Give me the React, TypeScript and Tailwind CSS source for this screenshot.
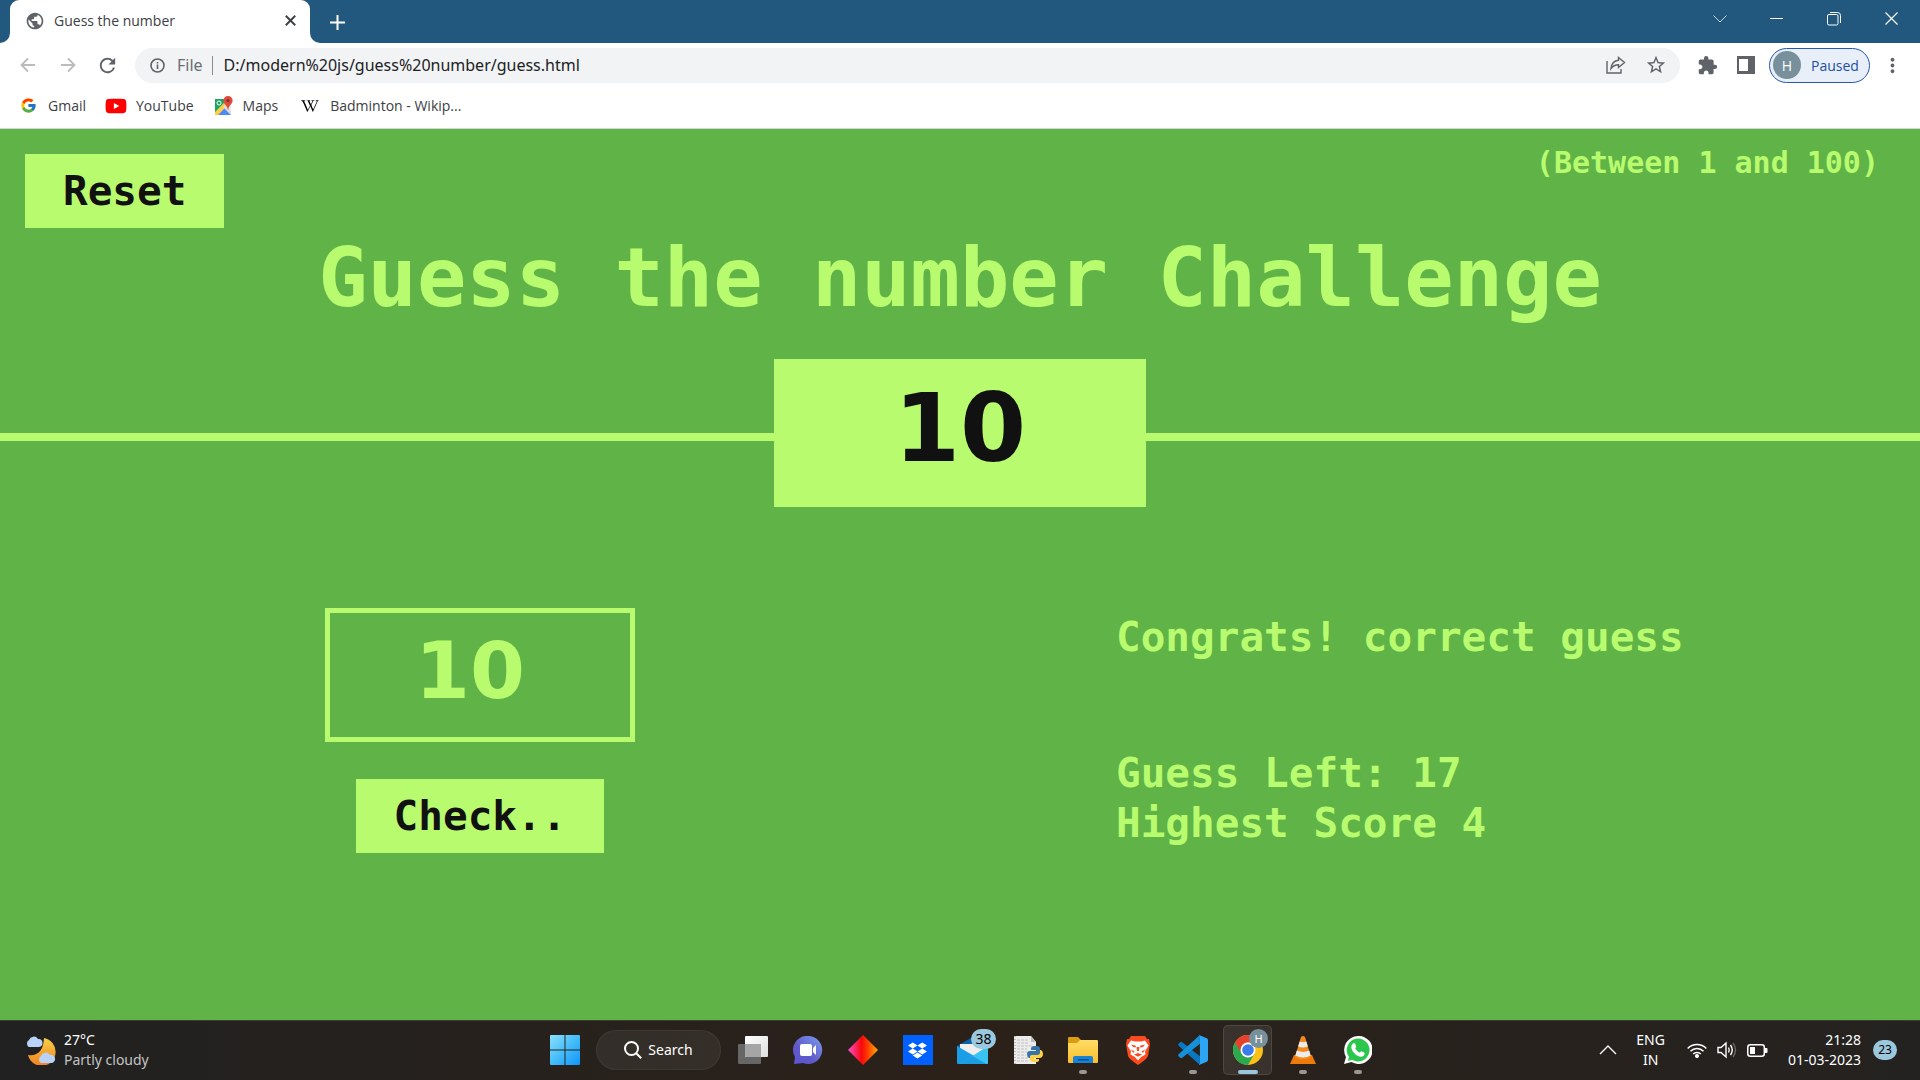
import React, { useState } from "react";
import { FcGoogle } from "react-icons/fc";
import { FaYoutube, FaWikipediaW, FaDropbox } from "react-icons/fa";
import { MdExtension, MdStarBorder, MdPublic, MdMoreVert, MdRefresh } from "react-icons/md";

function MapsIcon() {
  return (
    <svg width="18" height="20" viewBox="0 0 18 20" aria-hidden="true">
      <rect x="0" y="3" width="16" height="16" rx="1.5" fill="#e8e8e8" />
      <path d="M0 3h13L0 17z" fill="#1da462" />
      <path d="M1 19 9 11l7 8z" fill="#4c8bf5" />
      <path d="M0 16 13 3l3 3L3 19H0z" fill="#ffce44" />
      <path d="m10 9 6 6v4L8 11z" fill="#dcdcdc" />
      <path d="M13 0a4.600 4.600 0 0 0-4.600 4.600C8.400 8 12 9 12.700 13.500h.6C14 9 17.600 8 17.600 4.600A4.600 4.600 0 0 0 13 0z" fill="#dd4b3e" />
      <circle cx="13" cy="4.600" r="1.600" fill="#822f2b" />
      <circle cx="4" cy="7" r="2" fill="none" stroke="#fff" strokeWidth="1" />
    </svg>
  );
}

function Arrow({ flip }: { flip?: boolean }) {
  return (
    <svg width="16" height="16" viewBox="0 0 16 16" fill="none" stroke="#babcbe" strokeWidth="1.800" className={flip ? "rotate-180" : ""} aria-hidden="true">
      <path d="M15 8H2M8 1.500 1.500 8 8 14.500" />
    </svg>
  );
}

function TabStrip() {
  return (
    <div className="flex h-[43px] items-end bg-[#22577e] text-white">
      <svg width="10" height="10" className="shrink-0" aria-hidden="true"><path d="M10 0v10H0a10 10 0 0 0 10-10z" fill="#fff" /></svg>
      <div className="flex h-full w-[300px] items-center rounded-t-[9px] bg-white pr-[10px] pb-[2px] pl-[15px] text-[#3c4043]">
        <MdPublic className="size-[20px] text-[#5f6368]" />
        <span className="ml-[9px] flex-1 text-[14px]">Guess the number</span>
        <button aria-label="Close tab" className="grid size-5 place-items-center">
          <svg width="11" height="11" viewBox="0 0 10 10" stroke="#3c4043" strokeWidth="1.700"><path d="m.7.700 8.600 8.600M9.300.700.700 9.300" /></svg>
        </button>
      </div>
      <svg width="10" height="10" className="shrink-0" aria-hidden="true"><path d="M0 0v10h10a10 10 0 0 1-10-10z" fill="#fff" /></svg>
      <button aria-label="New tab" className="mb-[5px] ml-px grid size-[32px] place-items-center">
        <svg width="15" height="15" viewBox="0 0 15 15" stroke="#fff" strokeWidth="2"><path d="M7.500 0v15M0 7.500h15" /></svg>
      </button>
      <div className="ml-auto flex h-[37px] items-center self-start">
        <button aria-label="Search tabs" className="grid h-full w-[57px] place-items-center">
          <svg width="14" height="8" viewBox="0 0 14 8" fill="none" stroke="#c8d5df"><path d="m.5.500 6.500 6.500L13.500.500" /></svg>
        </button>
        <button aria-label="Minimize" className="grid h-full w-[57px] place-items-center">
          <svg width="13" height="1"><rect width="13" height="1" fill="#fff" /></svg>
        </button>
        <button aria-label="Restore" className="grid h-full w-[57px] place-items-center">
          <svg width="14" height="14" viewBox="0 0 14 14" fill="none" stroke="#fff"><rect x=".5" y="2.500" width="10.500" height="10.500" rx="1.500" /><path d="M3 .5h7.500a3 3 0 0 1 3 3V11" /></svg>
        </button>
        <button aria-label="Close" className="grid h-full w-[58px] place-items-center">
          <svg width="13" height="13" viewBox="0 0 13 13" stroke="#fff" strokeWidth="1.200"><path d="m.5.500 12 12m0-12-12 12" /></svg>
        </button>
      </div>
    </div>
  );
}

function Toolbar() {
  return (
    <div className="flex h-[44px] items-center pr-[16px] pl-[20px]">
      <button aria-label="Back" className="grid w-4 place-items-center"><Arrow /></button>
      <button aria-label="Forward" className="ml-[24px] grid w-4 place-items-center"><Arrow flip /></button>
      <button aria-label="Reload" className="ml-[20px]"><MdRefresh className="size-[23px] text-[#5f6368]" /></button>
      <div className="ml-[16px] flex h-[35px] flex-1 items-center rounded-full bg-[#f1f3f4] pr-[13px] pl-[15px] font-['Noto_Sans',sans-serif]">
        <svg width="15" height="15" viewBox="0 0 15 15" fill="none" stroke="#5f6368" strokeWidth="1.600" aria-hidden="true"><circle cx="7.500" cy="7.500" r="6.500" /><path d="M7.500 6.500v4.500M7.500 4v1.500" /></svg>
        <span className="ml-[12px] text-[16px] text-[#6b6f73]">File</span>
        <span className="mx-[9px] h-[19px] w-px bg-[#8a8d91]" />
        <input aria-label="Address" defaultValue="D:/modern%20js/guess%20number/guess.html" className="ml-[2px] min-w-0 flex-1 bg-transparent text-[16px] text-[#202124] outline-none" />
        <button aria-label="Share">
          <svg width="20" height="18" viewBox="0 0 20 18" fill="none" stroke="#5f6368" strokeWidth="1.400"><path d="M1 5v12h14v-4" /><path d="M12.500 1.500 18.500 6.500l-6 5V8.700C9 8.700 7 9.700 5 12.500 5.500 8 8 4.800 12.500 4.300z" /></svg>
        </button>
        <button aria-label="Bookmark this page" className="ml-[19px]"><MdStarBorder className="size-[22px] text-[#5f6368]" /></button>
      </div>
      <button aria-label="Extensions" className="ml-[17px]"><MdExtension className="size-[21px] text-[#5f6368]" /></button>
      <button aria-label="Side panel" className="ml-[19px]">
        <svg width="18" height="18"><rect width="18" height="18" fill="#5f6368" /><rect x="2" y="3" width="9" height="12" fill="#fff" /></svg>
      </button>
      <button className="ml-[14px] flex h-[35px] w-[101px] items-center rounded-full border border-[#2458b0] bg-[#e9eff8] pl-[3px] text-[14px] text-[#2050a5]">
        <span className="grid size-[28px] place-items-center rounded-full bg-[#78909c] text-[14px] text-white">H</span>
        <span className="ml-[10px]">Paused</span>
      </button>
      <button aria-label="Menu" className="ml-[11px]"><MdMoreVert className="size-[23px] text-[#5f6368]" /></button>
    </div>
  );
}

function Bookmarks() {
  const link = "flex items-center text-[14px] text-[#3c4043]";
  return (
    <nav className="flex h-[42px] items-center border-b border-[#d5d8db] pb-[4px] pl-[20px]">
      <a href="#gmail" className={link}><FcGoogle className="mr-[11px] size-[17px]" />Gmail</a>
      <a href="#youtube" className={link}><FaYoutube className="mr-[9px] ml-[19px] size-[22px] text-[#f00]" />YouTube</a>
      <a href="#maps" className={link}><span className="mr-[10px] ml-[21px]"><MapsIcon /></span>Maps</a>
      <a href="#wiki" className={link}><FaWikipediaW className="mr-[11px] ml-[23px] size-[18px] text-black" />Badminton - Wikip...</a>
    </nav>
  );
}

function Game() {
  const [guess, setGuess] = useState("10");
  const button = "bg-[#b9fb6e] px-[38px] py-3 text-[41px] leading-[50px] text-[#111]";
  return (
    <main className="flex-1 bg-[#60b347] font-['DejaVu_Sans_Mono',monospace] font-bold text-[#b9fb6e]">
      <div className="flex items-start justify-between px-[25px] pt-[25px]">
        <button className={button}>Reset</button>
        <p className="-mt-[9px] pr-[16px] text-[30px] leading-9">(Between 1 and 100)</p>
      </div>
      <h1 className="pt-px text-center text-[82px] leading-[98px]">Guess the number Challenge</h1>
      <div className="mt-[32px] flex items-center">
        <div className="mt-2 h-2 flex-1 bg-[#b9fb6e]" />
        <output className="w-[372px] bg-[#b9fb6e] pt-[14px] pb-[24px] text-center font-['DejaVu_Sans',sans-serif] text-[95px] leading-[110px] text-[#111]">10</output>
        <div className="mt-2 h-2 flex-1 bg-[#b9fb6e]" />
      </div>
      <section className="mt-[101px] grid grid-cols-2">
        <div className="flex flex-col items-center">
          <input aria-label="Your guess" value={guess} onChange={(e) => setGuess(e.target.value)} className="h-[134px] w-[310px] border-[5px] border-[#b9fb6e] bg-transparent pr-[20px] pb-[8px] text-center font-['DejaVu_Sans',sans-serif] text-[79px] outline-none" />
          <button className={`mt-[37px] ${button}`}>Check..</button>
        </div>
        <div className="pt-1 pl-[156px] text-[41px] leading-[50px]">
          <p className="mb-[86px]">Congrats! correct guess</p>
          <p>Guess Left: 17</p>
          <p>Highest Score 4</p>
        </div>
      </section>
    </main>
  );
}

function WindowsIcon() {
  return (
    <svg width="30" height="30" viewBox="0 0 30 30">
      <defs><linearGradient id="win" x1="0" y1="0" x2="1" y2="1"><stop stopColor="#8be0fc" /><stop offset=".5" stopColor="#45bdf9" /><stop offset="1" stopColor="#0f94fb" /></linearGradient></defs>
      <path d="M1 0h13.500v14.500H0V1a1 1 0 0 1 1-1zM15.500 0H29a1 1 0 0 1 1 1v13.500H15.500zM0 15.500h14.500V30H1a1 1 0 0 1-1-1zM15.500 15.500H30V29a1 1 0 0 1-1 1H15.500z" fill="url(#win)" />
    </svg>
  );
}

function TaskViewIcon() {
  return (
    <svg width="30" height="28" viewBox="0 0 30 28">
      <defs><linearGradient id="tv" x1="0" y1="0" x2="1" y2="1"><stop stopColor="#fff" /><stop offset="1" stopColor="#ddd" /></linearGradient></defs>
      <rect y="8" width="23" height="20" rx="1" fill="#666" />
      <rect x="7" width="23" height="21" rx="1" fill="url(#tv)" />
      <path d="M7 8h16v13H8a1 1 0 0 1-1-1z" fill="#a5a5a5" />
    </svg>
  );
}

function ChatIcon() {
  return (
    <svg width="30" height="28" viewBox="0 0 30 28">
      <defs><linearGradient id="chat" x1="0" y1="1" x2="1" y2="0"><stop stopColor="#5a55d6" /><stop offset=".4" stopColor="#6059c9" /><stop offset="1" stopColor="#7b9ff0" /></linearGradient></defs>
      <path d="M15 0a14 14 0 1 1-5 27L1 28l1-7A14 14 0 0 1 15 0z" fill="url(#chat)" />
      <rect x="7" y="8" width="12" height="12" rx="2" fill="#fff" />
      <path d="m20 12 3-3v10l-3-3z" fill="#fff" />
    </svg>
  );
}

function DiamondIcon() {
  return (
    <svg width="30" height="30" viewBox="0 0 30 30">
      <defs><linearGradient id="dia"><stop stopColor="#ff4fd0" /><stop offset=".45" stopColor="#f8080c" /><stop offset=".65" stopColor="#ff3b00" /><stop offset="1" stopColor="#ffae00" /></linearGradient></defs>
      <path d="m15 0 15 15-15 15L0 15z" fill="url(#dia)" />
    </svg>
  );
}

function MailIcon() {
  return (
    <svg width="31" height="27" viewBox="0 0 31 27">
      <path d="M0 9 15.500 0 31 9v6H0z" fill="#0a5fa8" />
      <path d="M3 7h25v8l-12 7L3 13z" fill="#eee" />
      <path d="M0 9 31 27H1a1 1 0 0 1-1-1z" fill="#1a9fe6" />
      <path d="M31 9v17a1 1 0 0 1-1 1H3z" fill="#39c4f2" />
      <path d="m15.500 19 14 8H3z" fill="#1d9ee4" />
    </svg>
  );
}

function PythonFileIcon() {
  return (
    <svg width="30" height="30" viewBox="0 0 30 30">
      <path d="M1 1h17l5 6v22H1z" fill="#ececec" />
      <path d="M18 1v6h5z" fill="#bbb" />
      <path d="M4 5h12M4 8h12M4 11h15M4 14h10M4 17h10M4 20h9M4 23h12M4 26h12" stroke="#c2c2c2" strokeDasharray="3 1" />
      <path d="M2 1v28" stroke="#888" strokeDasharray="1 2" />
      <path d="M21 11h3q3 0 3 3v4q0 2-2 2h-5q-3 0-3 3h-1q-2-1-2-4t3-3h6v-1h-5v-1q0-3 3-3z" fill="#3673a8" />
      <path d="M27 15h1q2 1 2 4t-3 4h-6v1h5v1q0 2-3 2h-3q-3 0-3-3v-2q0-2 3-2h4q3 0 3-3z" fill="#ffd243" />
    </svg>
  );
}

function FolderIcon() {
  return (
    <svg width="30" height="26" viewBox="0 0 30 26">
      <defs><linearGradient id="fold" x1="0" y1="0" x2="0" y2="1"><stop stopColor="#ffdc66" /><stop offset="1" stopColor="#fcbf2b" /></linearGradient></defs>
      <path d="M0 1a1 1 0 0 1 1-1h9l3 3h16v6H0z" fill="#dc9c11" />
      <path d="M0 6h9l3-3h17a1 1 0 0 1 1 1v21a1 1 0 0 1-1 1H1a1 1 0 0 1-1-1z" fill="url(#fold)" />
      <path d="M5 26v-5a2 2 0 0 1 2-2h16a2 2 0 0 1 2 2v5z" fill="#1782d6" />
      <rect x="10" y="22" width="11" height="1.500" fill="#0b4f8f" />
    </svg>
  );
}

function BraveIcon() {
  return (
    <svg width="26" height="30" viewBox="0 0 26 30">
      <path d="M6 1h14l2 3h2l1 5-2 12q-1 3-10 9-9-6-10-9L1 9l1-5h2z" fill="#fb4a20" />
      <path d="m6 5.500 4 1h6l4-1 3.500 5-3.500 6 .5 3-4.500 2.500-3 3.500-3-3.500L5.500 19.500l.5-3-3.500-6z" fill="#fff" />
      <path d="m6 9.500 5 1.200-.5 1.800L8 12zm14 0-5 1.200.5 1.800L18 12zM11.500 12h3l-.5 4h-2zM5.500 14l4.500 3-2 .8zm15 0L16 17l2 .8zM9 19.500l4-1.500 4 1.500-4 2.300z" fill="#fb4a20" />
    </svg>
  );
}

function CodeIcon() {
  return (
    <svg width="30" height="30" viewBox="0 0 100 100">
      <path d="M2 29 7 24q3-3 7-0L73 71v29L2 36q-3-4 0-7z" fill="#0a78c0" />
      <path d="M2 71l5 5q3 3 7 0L73 29V0L2 64q-3 4 0 7z" fill="#1590dc" />
      <path d="M70 0 96 11q4 2 4 6v66q0 4-4 6L70 100q-2 0 3-5V5z" fill="#2ba5f4" />
    </svg>
  );
}

function ChromeIcon() {
  return (
    <svg width="30" height="30" viewBox="0 0 30 30">
      <circle cx="15" cy="15" r="15" fill="#fbc116" />
      <path d="M2 7.500A15 15 0 0 0 15 30l6.500-11.300L15 15z" fill="#2ca94f" />
      <path d="M2 7.500a15 15 0 0 1 26 0H15A7.500 7.500 0 0 0 8.500 18.700z" fill="#e8402f" />
      <circle cx="15" cy="15" r="7.500" fill="#fff" />
      <circle cx="15" cy="15" r="5.800" fill="#3b7bea" />
    </svg>
  );
}

function VlcIcon() {
  return (
    <svg width="26" height="28" viewBox="0 0 26 28">
      <path d="M4 19h18l4 9H0z" fill="#ee7a0c" />
      <path d="M11 1q2-2 4 0l6 20q-8 5-16 0z" fill="#f58a1b" />
      <path d="m9.700 5.500-1.600 5q5 2 9.800 0l-1.600-5q-3.300 1.300-6.600 0zM6.800 14.500l-1.500 5q8 4 15.400 0l-1.500-5q-6 2.800-12.400 0z" fill="#ececec" />
    </svg>
  );
}

function WhatsAppIcon() {
  return (
    <svg width="28" height="28" viewBox="0 0 28 28">
      <path d="M14 0a14 14 0 1 1-6.500 26L0 28l2-7A14 14 0 0 1 14 0z" fill="#fff" />
      <path d="M14 2.500a11.500 11.500 0 1 1-6 21.300l-4.200 1.200 1.200-4.200A11.500 11.500 0 0 1 14 2.500z" fill="#2cc64d" />
      <path d="M9 7.500q1-.8 2 0l1.200 3q.2.700-1 2 1.500 3 4.600 4.300 1.200-1.700 2-1.400l2.700 1.400q.5 4-4 4-4-.5-7.500-5-3.500-5 0-8.300z" fill="#fff" />
    </svg>
  );
}

function TaskbarApp({ label, children, state, badge }: { label: string; children: React.ReactNode; state?: "open" | "active"; badge?: React.ReactNode }) {
  return (
    <button aria-label={label} className="relative grid h-[60px] w-[55px] place-items-center">
      {state === "active" && <span className="absolute inset-x-[3px] inset-y-[5px] rounded-[5px] border border-white/10 bg-white/8" />}
      <span className="relative">{children}</span>
      {badge}
      {state === "open" && <span className="absolute bottom-[6px] h-1 w-2 rounded-full bg-[#9a9690]" />}
      {state === "active" && <span className="absolute bottom-[6px] h-1 w-5 rounded-full bg-[#9cc8dd]" />}
    </button>
  );
}

function Taskbar() {
  return (
    <footer className="grid h-[60px] grid-cols-[1fr_auto_1fr] items-center bg-linear-to-r from-[#212121] via-[#2b2119] to-[#242220] font-['Noto_Sans',sans-serif] text-[14px] leading-5 text-white shadow-[inset_0_1px_0_#3b3b38]">
      <div className="flex items-center pl-[25px]">
        <svg width="31" height="30" viewBox="0 0 31 30" aria-hidden="true">
          <defs><linearGradient id="moon" x1="0" y1="0" x2="0" y2="1"><stop stopColor="#f8ce48" /><stop offset="1" stopColor="#f0821e" /></linearGradient></defs>
          <path d="M19 3a14 14 0 1 1-16 17q15 2 16-17z" fill="url(#moon)" />
          <path d="M4 12a4 4 0 0 1 0-7 5 5 0 0 1 9-1 4 4 0 0 1 1 8z" fill="#b9d2f7" />
          <path d="M16 28a4 4 0 0 1 0-7 5 5 0 0 1 9-1 4 4 0 0 1 2 8z" fill="#b9d2f7" />
        </svg>
        <div className="ml-2"><p>27°C</p><p className="text-[#c4c4c4]">Partly cloudy</p></div>
      </div>
      <div className="flex items-center pl-[2px]">
        <TaskbarApp label="Start"><WindowsIcon /></TaskbarApp>
        <button className="mx-1 flex h-10 w-[125px] items-center justify-center rounded-full border border-white/5 bg-white/6">
          <svg width="18" height="18" viewBox="0 0 18 18" fill="none" stroke="#fff" strokeWidth="2" className="mr-[6px]"><circle cx="7.500" cy="7.500" r="6.500" /><path d="m12.200 12.200 5 5" /></svg>
          Search
        </button>
        <TaskbarApp label="Task view"><TaskViewIcon /></TaskbarApp>
        <TaskbarApp label="Chat"><ChatIcon /></TaskbarApp>
        <TaskbarApp label="Diamond"><DiamondIcon /></TaskbarApp>
        <TaskbarApp label="Dropbox"><span className="grid size-[30px] place-items-center bg-[#0061fe]"><FaDropbox className="size-[19px]" /></span></TaskbarApp>
        <TaskbarApp label="Mail" badge={<span className="absolute top-[9px] right-[4px] grid h-5 w-[25px] place-items-center rounded-full bg-[#9cc8dd] text-[14px] text-black">38</span>}><MailIcon /></TaskbarApp>
        <TaskbarApp label="Python file"><PythonFileIcon /></TaskbarApp>
        <TaskbarApp label="File Explorer" state="open"><FolderIcon /></TaskbarApp>
        <TaskbarApp label="Brave"><BraveIcon /></TaskbarApp>
        <TaskbarApp label="Visual Studio Code" state="open"><CodeIcon /></TaskbarApp>
        <TaskbarApp label="Chrome" state="active" badge={<span className="absolute top-[9px] right-[7px] grid size-[19px] place-items-center rounded-full bg-[#78909c] text-[11px] text-white">H</span>}><ChromeIcon /></TaskbarApp>
        <TaskbarApp label="VLC" state="open"><VlcIcon /></TaskbarApp>
        <TaskbarApp label="WhatsApp" state="open"><WhatsAppIcon /></TaskbarApp>
      </div>
      <div className="flex items-center justify-end pr-[23px]">
        <svg width="18" height="10" viewBox="0 0 18 10" fill="none" stroke="#fff" strokeWidth="1.400"><path d="m1 9 8-8 8 8" /></svg>
        <div className="ml-[19px] text-center"><p>ENG</p><p>IN</p></div>
        <svg width="20" height="15" viewBox="0 0 20 15" fill="none" stroke="#fff" strokeWidth="1.500" className="ml-[22px]"><path d="M.7 5.500a13 13 0 0 1 18.600 0M3.500 8.300a9 9 0 0 1 13 0M6.200 11a5.300 5.300 0 0 1 7.600 0" /><circle cx="10" cy="13" r="1.300" fill="#fff" /></svg>
        <svg width="20" height="18" viewBox="0 0 20 18" fill="none" stroke="#fff" strokeWidth="1.400" className="ml-[10px]"><path d="M1 6.500v5h3l5 4.500V2L4 6.500z" /><path d="M11.500 6.500q1.500 2.500 0 5M13.500 4q3.500 5 0 10" /><path d="M16 2q5 7 0 14" stroke="#666" /></svg>
        <svg width="21" height="13" viewBox="0 0 21 13" className="ml-[10px]"><rect x=".8" y=".8" width="16.500" height="11.400" rx="2.500" fill="none" stroke="#fff" strokeWidth="1.500" /><rect x="3" y="3" width="5" height="7" fill="#fff" /><path d="M18 4h1.500q1 0 1 1v3q0 1-1 1H18z" fill="#fff" /></svg>
        <div className="ml-[20px] text-right"><p>21:28</p><p>01-03-2023</p></div>
        <span className="ml-[12px] grid h-5 w-6 place-items-center rounded-full bg-[#9cc8dd] text-[12px] text-black">23</span>
      </div>
    </footer>
  );
}

export default function App() {
  return (
    <div className="flex min-h-screen flex-col bg-white font-['Open_Sans','Noto_Sans',sans-serif]">
      <TabStrip />
      <Toolbar />
      <Bookmarks />
      <Game />
      <Taskbar />
    </div>
  );
}
